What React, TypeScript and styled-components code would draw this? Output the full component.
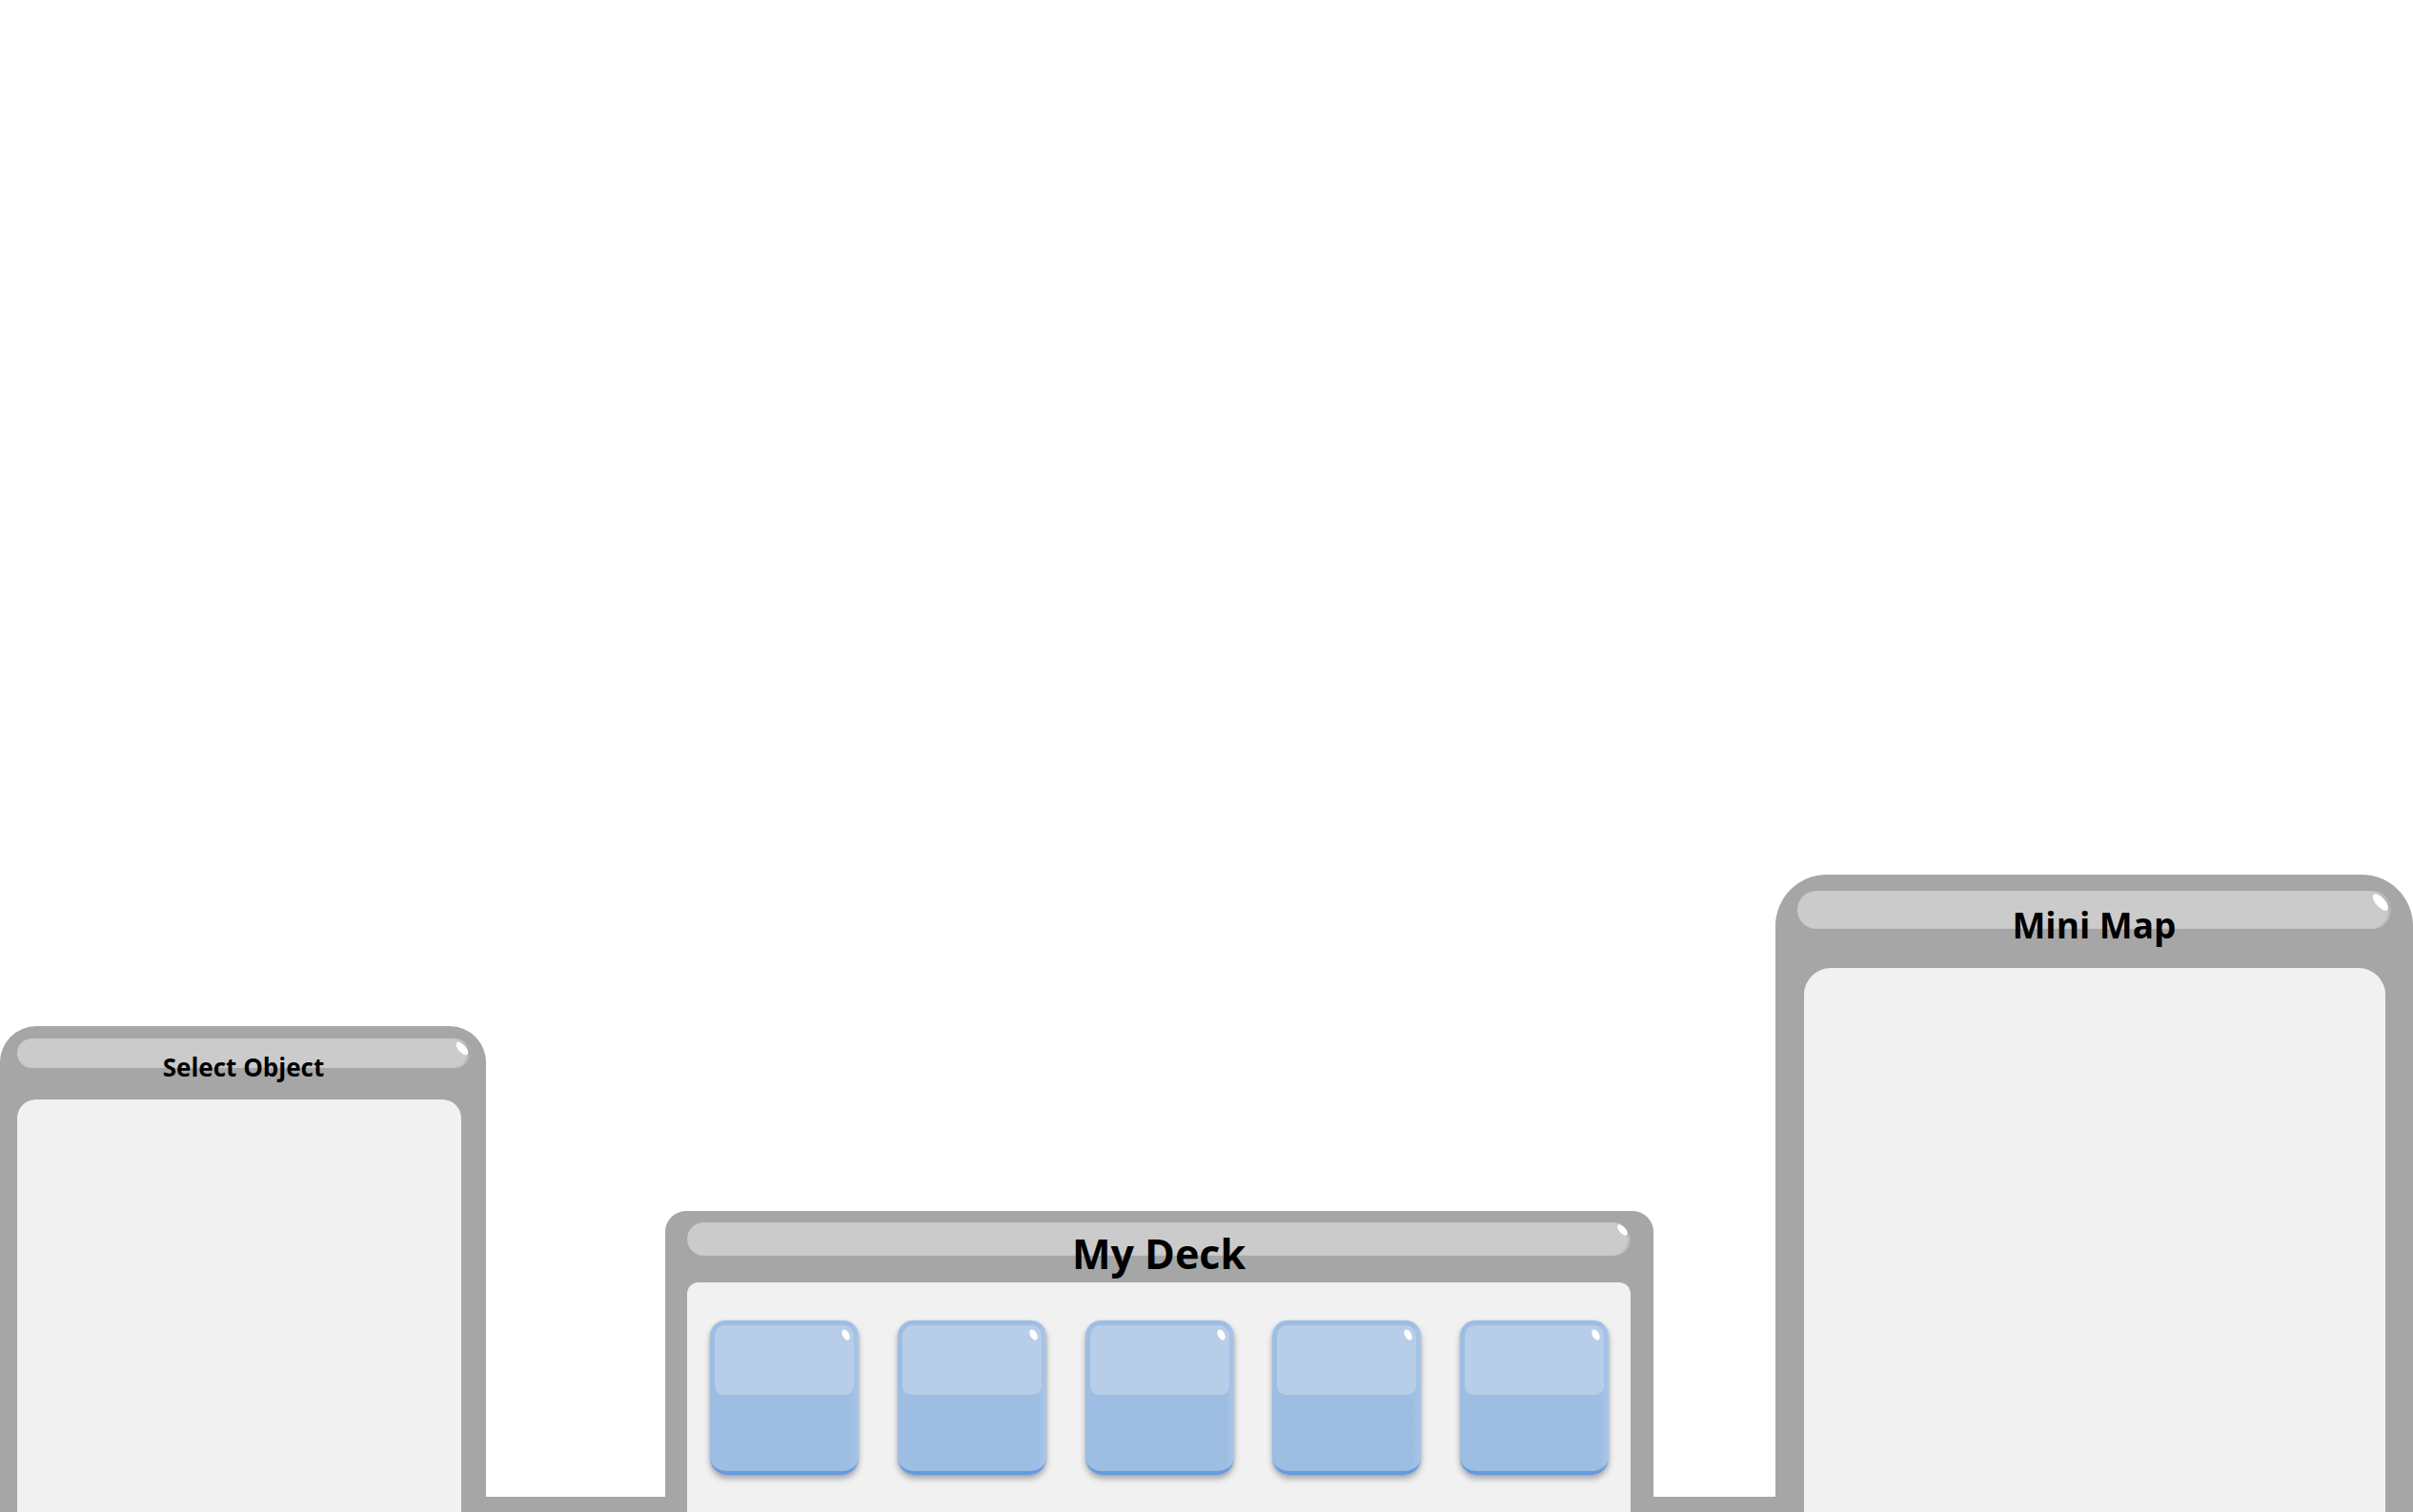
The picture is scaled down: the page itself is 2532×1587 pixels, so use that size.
import React from "react";
import styled, { createGlobalStyle } from "styled-components";

const GlobalStyle = createGlobalStyle`
  html, body {
    margin: 0;
    padding: 0;
    background: #ffffff;
    font-family: "Open Sans", "Noto Sans CJK KR", sans-serif;
  }
  * { box-sizing: border-box; }
`;

const Screen = styled.div`
  height: 100vh;
  overflow: hidden;
  display: flex;
  align-items: flex-end;
  background: linear-gradient(to top, #a6a6a6 16px, #ffffff 16px);
`;

type PanelProps = {
  $width: number;
  $height: number;
  $radius: number;
  $offset?: number;
};

const Panel = styled.section<PanelProps>`
  flex: none;
  width: ${(p) => p.$width}px;
  height: ${(p) => p.$height}px;
  margin-left: ${(p) => p.$offset ?? 0}px;
  background: #a6a6a6;
  border-radius: ${(p) => p.$radius}px ${(p) => p.$radius}px 0 0;
  display: flex;
  flex-direction: column;
`;

type BarProps = {
  $top: number;
  $left: number;
  $right: number;
  $height: number;
  $textTop: number;
  $glossW: number;
  $glossH: number;
  $glossRight: number;
  $glossTop: number;
};

const TitleBar = styled.header<BarProps>`
  position: relative;
  flex: none;
  height: ${(p) => p.$height}px;
  margin: ${(p) => p.$top}px ${(p) => p.$right}px 0 ${(p) => p.$left}px;
  padding-top: ${(p) => p.$textTop}px;
  background: #cbcbcb;
  border-radius: ${(p) => p.$height / 2}px;
  box-shadow: inset -3px 0 3px -1px rgba(0, 0, 0, 0.12);
  display: flex;
  justify-content: center;
  align-items: flex-start;

  &::after {
    content: "";
    position: absolute;
    width: ${(p) => p.$glossW}px;
    height: ${(p) => p.$glossH}px;
    right: ${(p) => p.$glossRight}px;
    top: ${(p) => p.$glossTop}px;
    background: #ffffff;
    border-radius: 50%;
    transform: rotate(-42deg);
    box-shadow: 1px 1px 0 rgba(120, 120, 120, 0.35);
  }
`;

const Title = styled.h2<{ $size: number }>`
  margin: 0;
  font-family: "Open Sans", "Noto Sans CJK KR", sans-serif;
  font-weight: 700;
  font-size: ${(p) => p.$size}px;
  line-height: 1;
  color: #000000;
  white-space: nowrap;
  position: relative;
  z-index: 1;
`;

type BodyProps = {
  $gap: number;
  $left: number;
  $right: number;
  $radius: number;
};

const Body = styled.div<BodyProps>`
  flex: 1;
  margin: ${(p) => p.$gap}px ${(p) => p.$right}px 0 ${(p) => p.$left}px;
  background: #f1f1f1;
  border-radius: ${(p) => p.$radius}px ${(p) => p.$radius}px 0 0;
`;

const CardRow = styled.div`
  display: flex;
  justify-content: space-between;
  align-items: flex-start;
  padding: 40px 23px 0 24px;
`;

const Card = styled.div`
  position: relative;
  width: 156px;
  height: 162px;
  padding: 5px 5px 0;
  background: linear-gradient(to right, #9dbde3 0%, #9dbde3 94%, #a9c6e8 100%);
  border-bottom: 4px solid #659ae2;
  border-radius: 16px 16px 18px 18px;
  box-shadow: 0 4px 6px rgba(0, 0, 0, 0.3), 0 0 2px rgba(0, 0, 0, 0.12);

  &::after {
    content: "";
    position: absolute;
    width: 7px;
    height: 12px;
    right: 10px;
    top: 9px;
    background: #ffffff;
    border-radius: 50%;
    transform: rotate(-30deg);
  }
`;

const CardShine = styled.div`
  height: 73px;
  background: #b7cde8;
  border-radius: 11px 11px 9px 9px;
`;

export default function App() {
  return (
    <>
      <GlobalStyle />
      <Screen>
        <Panel $width={510} $height={510} $radius={38}>
          <TitleBar
            $top={13}
            $left={18}
            $right={17}
            $height={31}
            $textTop={17}
            $glossW={8}
            $glossH={17}
            $glossRight={4}
            $glossTop={2}
          >
            <Title $size={26}>Select Object</Title>
          </TitleBar>
          <Body $gap={33} $left={18} $right={26} $radius={20} />
        </Panel>

        <Panel $width={1037} $height={316} $radius={22} $offset={188}>
          <TitleBar
            $top={12}
            $left={23}
            $right={24}
            $height={35}
            $textTop={11}
            $glossW={7}
            $glossH={14}
            $glossRight={5}
            $glossTop={1}
          >
            <Title $size={43}>My Deck</Title>
          </TitleBar>
          <Body $gap={28} $left={23} $right={24} $radius={12}>
            <CardRow>
              {[0, 1, 2, 3, 4].map((i) => (
                <Card key={i}>
                  <CardShine />
                </Card>
              ))}
            </CardRow>
          </Body>
        </Panel>

        <Panel $width={669} $height={669} $radius={54} $offset={128}>
          <TitleBar
            $top={17}
            $left={23}
            $right={23}
            $height={40}
            $textTop={17}
            $glossW={10}
            $glossH={22}
            $glossRight={6}
            $glossTop={1}
          >
            <Title $size={37}>Mini Map</Title>
          </TitleBar>
          <Body $gap={41} $left={30} $right={29} $radius={28} />
        </Panel>
      </Screen>
    </>
  );
}
